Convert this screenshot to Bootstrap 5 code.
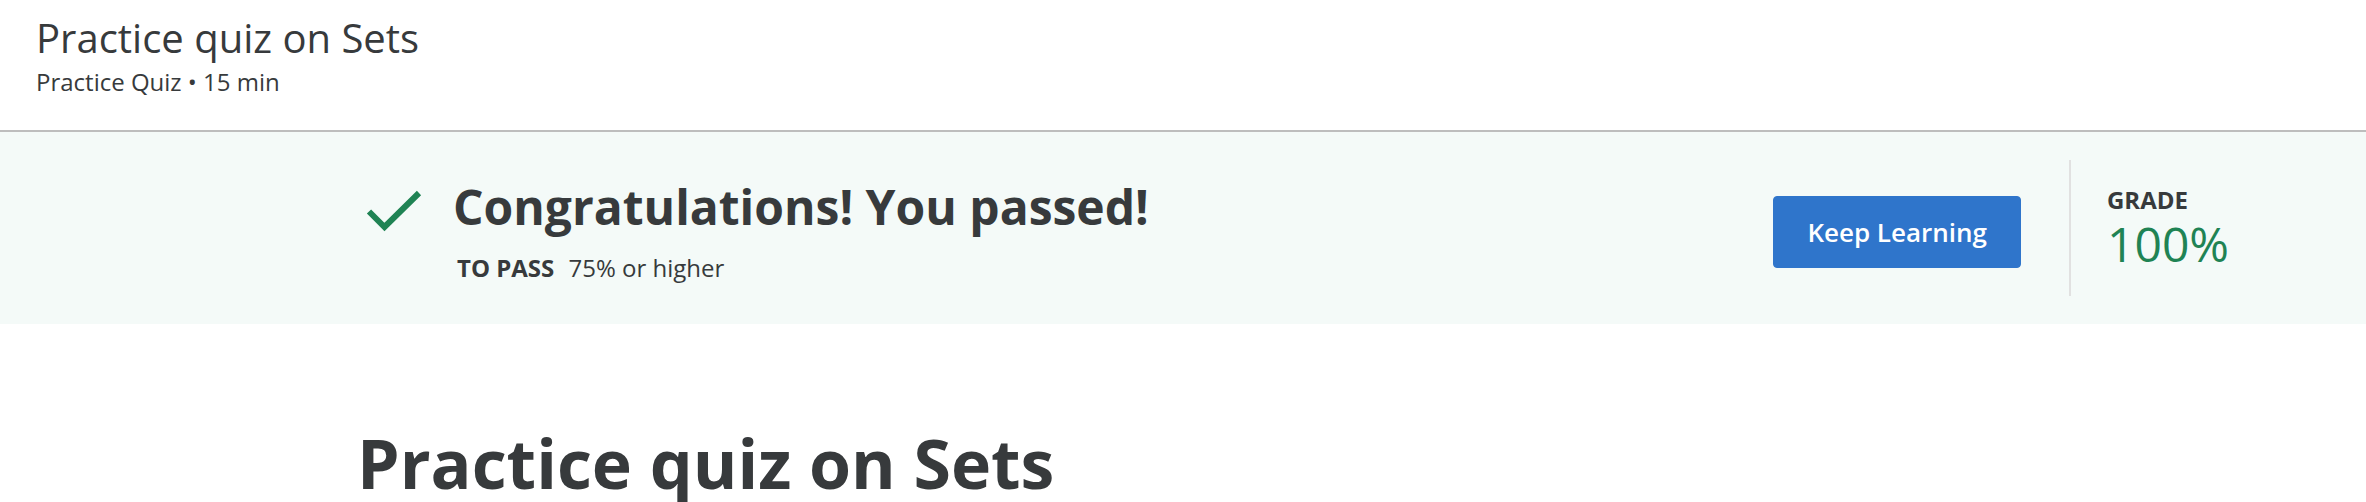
<!DOCTYPE html>
<html lang="en">
<head>
<meta charset="utf-8">
<meta name="viewport" content="width=device-width, initial-scale=1">
<title>Practice quiz on Sets</title>
<link href="https://cdn.jsdelivr.net/npm/bootstrap@5.3.0/dist/css/bootstrap.min.css" rel="stylesheet">
<style>
  body { font-family: "Open Sans", sans-serif; font-size: 24px; line-height: 36px; color: #373a3c; }
  .quiz-header { padding: 14px 36px 28px; border-bottom: 2px solid #bdbdbd; }
  .quiz-header h1 { font-size: 40px; line-height: 48px; font-weight: 400; }
  .quiz-header p { line-height: 40px; }
  .result-banner { background: #f4faf8; padding: 28px 128px 28px 364px; }
  .result-summary { padding-top: 4px; }
  .result-check { width: 60px; height: 60px; margin-right: 29px; }
  .result-title { font-size: 48px; line-height: 64px; font-weight: 700; }
  .result-pass { margin-top: 11px; padding-left: 4px; }
  .btn-keep { --bs-btn-color: #fff; --bs-btn-bg: #2f75cb; --bs-btn-border-color: #2f75cb; --bs-btn-hover-color: #fff; --bs-btn-hover-bg: #255fa8; --bs-btn-hover-border-color: #255fa8; --bs-btn-font-size: 26px; --bs-btn-line-height: 36px; --bs-btn-font-weight: 600; --bs-btn-border-radius: 4px; --bs-btn-padding-x: 33px; --bs-btn-padding-y: 17px; margin-top: 8px; margin-right: 48px; }
  .grade-box { min-height: 136px; border-left: 2px solid #e1e1e1; padding-left: 36px; padding-right: 9px; }
  .grade-label { line-height: 32px; font-weight: 700; }
  .grade-value { font-size: 48px; line-height: 56px; color: #1f8354; }
  .quiz-main { padding: 100px 128px 0 357px; }
  .quiz-main h2 { font-size: 68px; line-height: 78px; font-weight: 700; }
</style>
</head>
<body>
<header class="quiz-header">
  <h1 class="m-0">Practice quiz on Sets</h1>
  <p class="m-0">Practice Quiz • 15 min</p>
</header>
<section class="result-banner d-flex align-items-center">
  <div class="result-summary d-flex flex-grow-1 align-items-start">
    <svg class="result-check flex-shrink-0" viewBox="0 0 60 60" fill="none" stroke="#1f8354" stroke-width="6" aria-hidden="true"><path d="M5 36.500 20.500 52 55 18"/></svg>
    <div>
      <h2 class="result-title m-0">Congratulations! You passed!</h2>
      <p class="result-pass mb-0"><strong class="me-2">TO PASS</strong> 75% or higher</p>
    </div>
  </div>
  <button type="button" class="btn btn-keep flex-shrink-0">Keep Learning</button>
  <div class="grade-box d-flex flex-column justify-content-center flex-shrink-0">
    <div class="grade-label">GRADE</div>
    <div class="grade-value">100%</div>
  </div>
</section>
<main class="quiz-main">
  <h2 class="m-0">Practice quiz on Sets</h2>
</main>
<script src="https://cdn.jsdelivr.net/npm/bootstrap@5.3.0/dist/js/bootstrap.bundle.min.js"></script>
</body>
</html>
